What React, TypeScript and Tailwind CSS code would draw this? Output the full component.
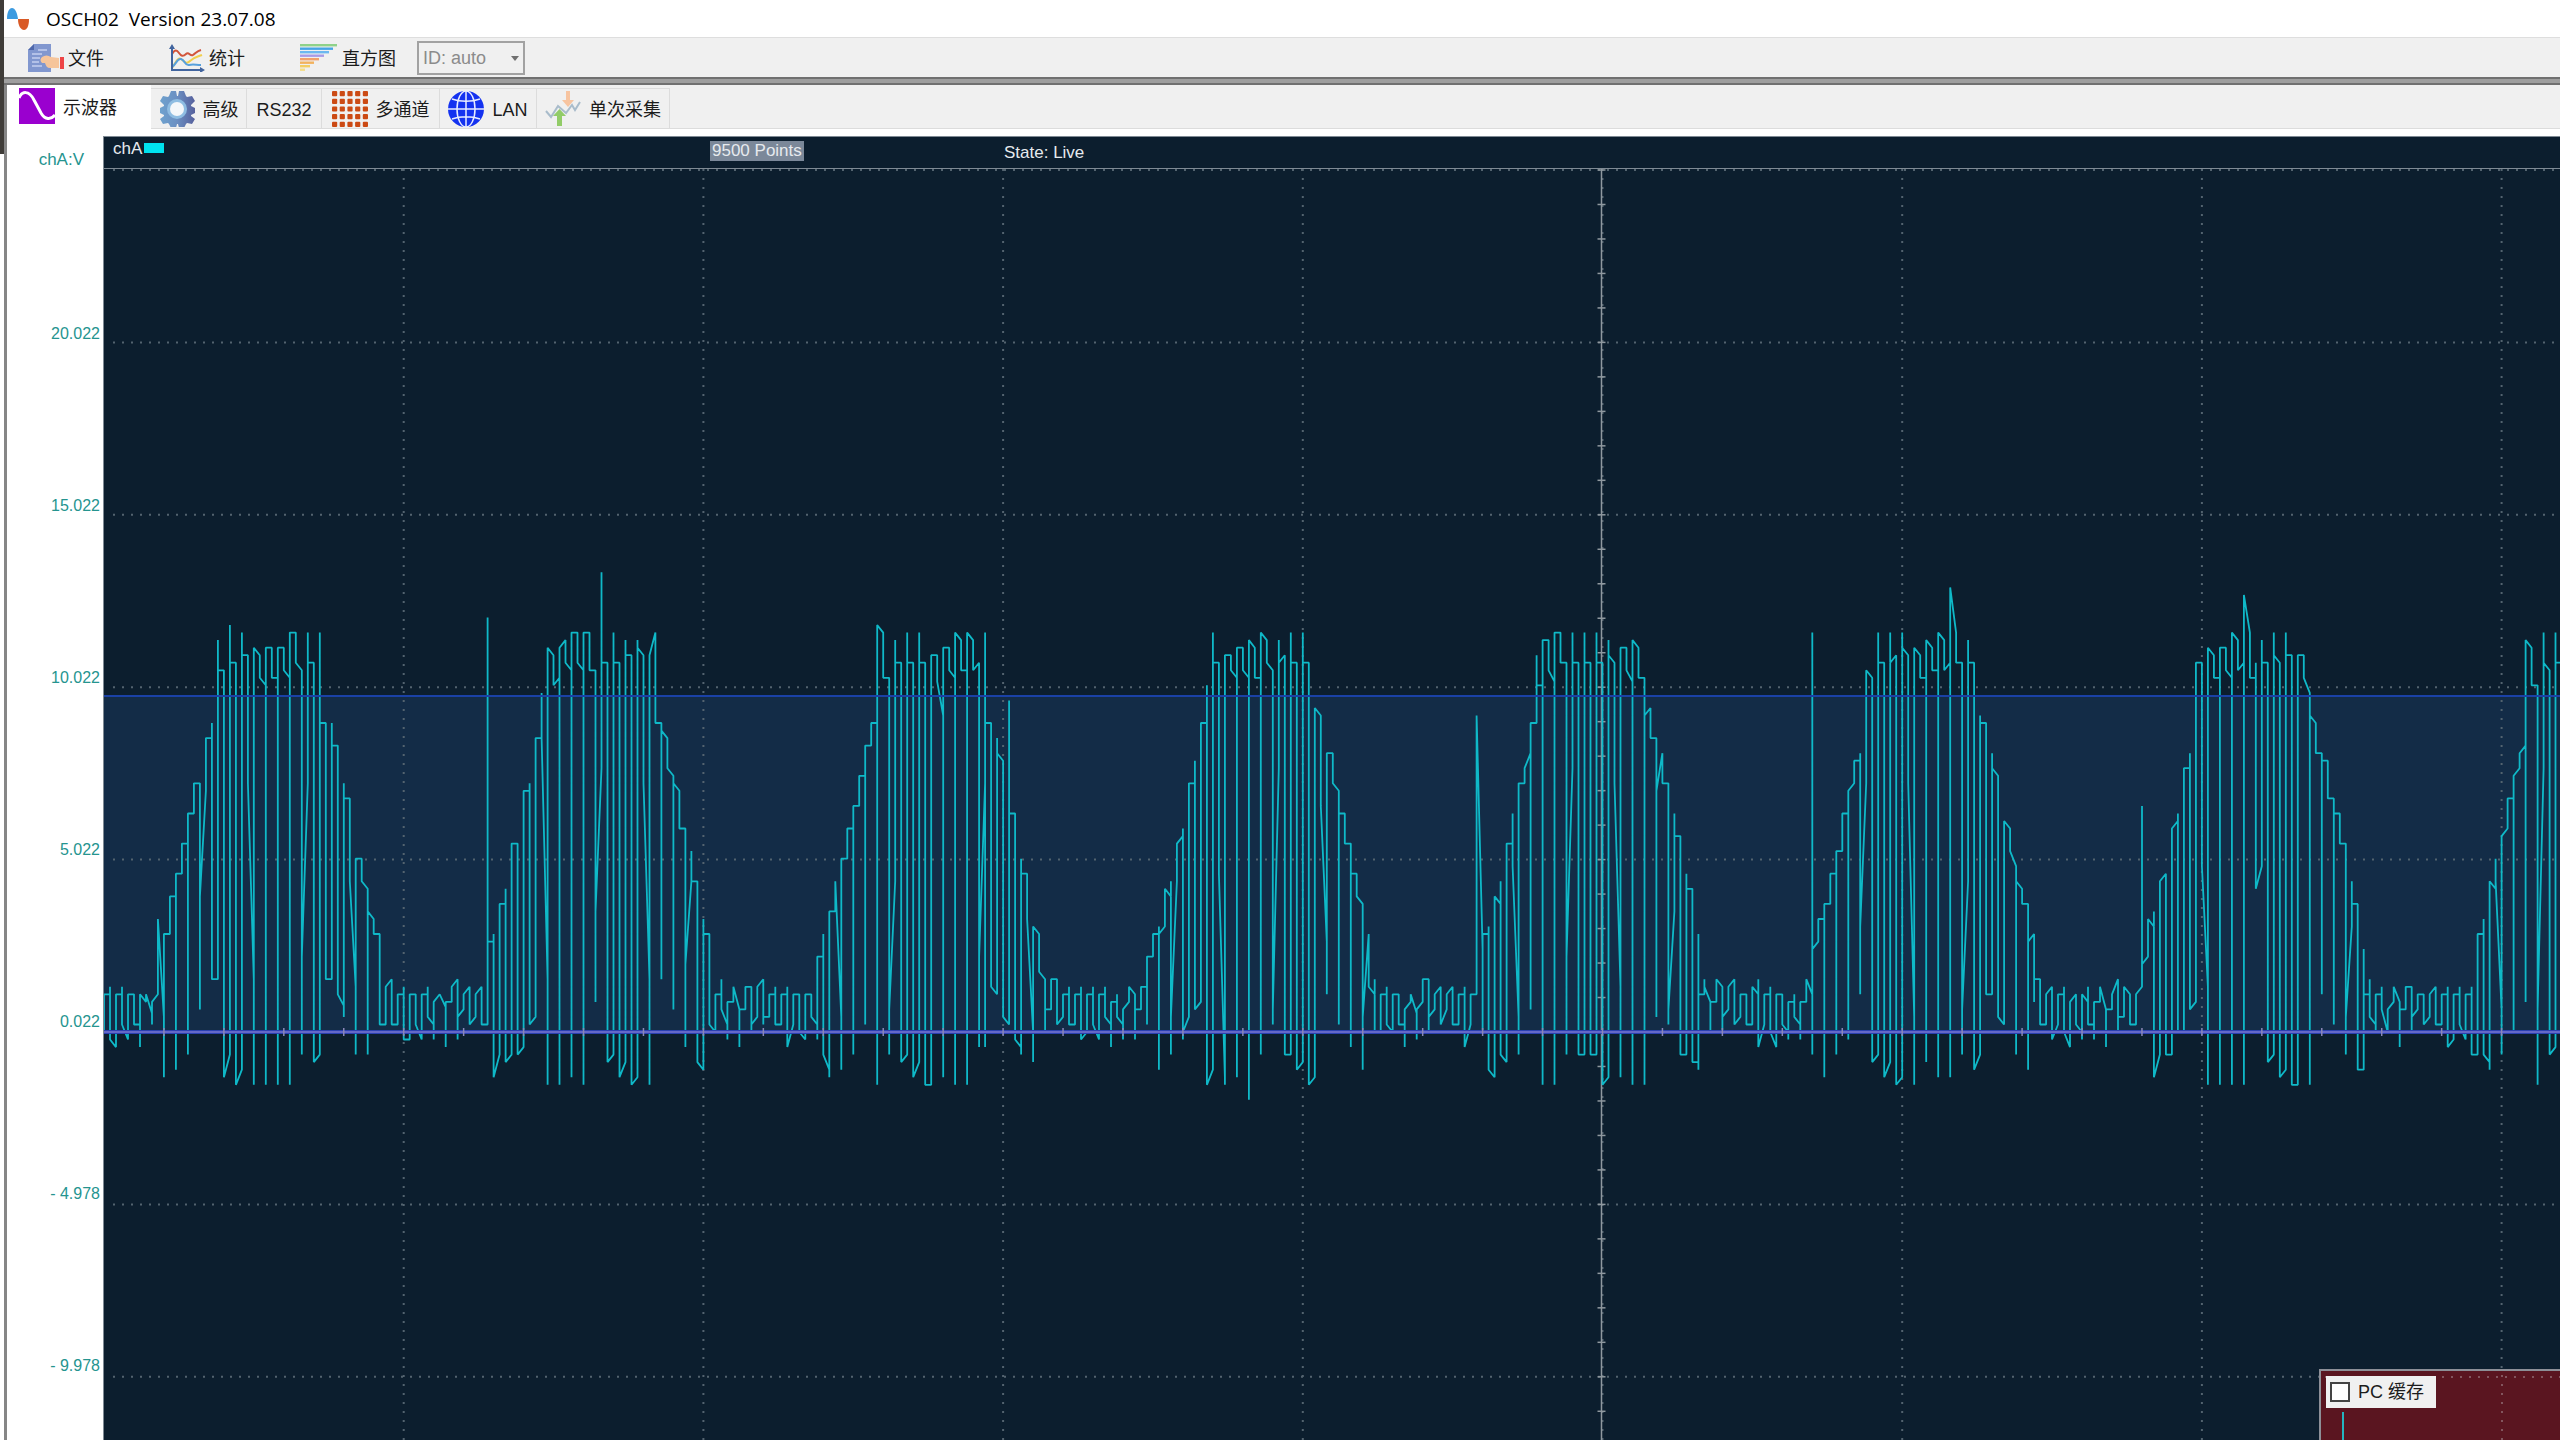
import type { ReactNode } from "react";

// One entry per sample column: the ADC levels the trace visits there, in order.
const TRACE = [
  "0 5|5 6 -1|-2 5|5 6 1|-1 5|5 1|1 -2 5|4 5|2.5 1 4|5 15|2 -6 13|13 18|18 -5 21|21 25|25 -3 29|29 33",
  "33 3 18|32 39|39 41 7|7 52 48|48 -6|-3 54 49|49 -7|-5 53 50|50 33|7 -7 51|50 47|46 -7 51|51 47|47 -7 51",
  "51 48|47 -7 53|53 49|48 -3 10|33 53 49|49 -4|-3 53 41|41 7|7 41 38|38 5|3.5 2 33 31|31 20|6 -3 23|23 20",
  "19 -3 16|15 13|13 1|1 6|7 1|1 5|5 6 -1|-1 5|5 1|-1 5|5 6 2|1 -1 4|5|3.3 -2 4|4 6|7 -1 2|3 5|6 1|2 5|6 1",
  "1 55 11 12|12 13 -6|-3 17|17 19 -4|-3 25|25 -3|-2 32|32 33 1|2 39|39 45 39|7 -7 51|50 46|47 -7 51|52 49",
  "48 -6 53|53 49|48 -7 53|53 48|48 4 16|35 61 49|49 -4|-3 53 49|49 -6|-4 52 50|50 -7|-6 52 51|50 33|7 -7 50",
  "53 41|41 7 40|39 35|34 3 33|32 27|27 -2 9|20 24 20|20 -4|-5 15 13|13 1|0 5|5 7 3|1 -1 4|4 6|3 -2 3|3 6",
  "6 0 1|2 6|7 1 2|2 5|5 6 1|1 5|5 6 -2|1 5|5 0|-1 5|5 2|1 -1 10|10 13 -3|-5 -6 16|16 20|2 -5 23|23 27",
  "27 -3 30|30 34|34 35 1 38|38 41|41 -7 54|53 47|47 -3 3|20 52 49|49 -4|-3 53 49|49 -6|-4 53 49|49 -7|-7 50",
  "50 46.5|42 -6 51|51 48|47 -7 53|52 48|48 -7 53|52 48|49 -2 10|33 53 -2 41|41 6|5 39 37|36 2|1 44 29|29 -1",
  "-2 -3 23 21|21 15|0 -4 14|13 8|7 0 3|3 7|7 1|2 5|5 6 1|1 5|5 6 -1|0 5|5 6 1|-1 5|5 6 2|1 -2 4|4 5 2",
  "1 -1 3|4 6|5 -1 3|3 6|6 1 10|10 13|13 14 -5 13|14 19|18 20 -3 2|20 25|26 27 -1 0|2 33|33 36 3|4 41|41 46 -7",
  "-5 53 49|49 21|-6 -7 50|50 48|47 -6 51|51 48|47 -9 52|51 47|47 -3 53|52 49|48 1 3|35 52 49|50 -3|-3 53 49",
  "49 -5|-4 53 49|49 -7|-6 43|42 30|12 5 37|37 33|32 1 29|29 25|25 -2 21|21 18|17 -5 2|13 6|5 7 0|0 5|5 6 1",
  "0 5|5 1|1 -2 3|4 5|2.5 -1 3|4 7|7 0 2|3 5|6 1|3 5|6 1|1 5|5 6 -2|1 5|5 42|11 0 13|13 14 -5|-6 18|17 20 -3",
  "-4 25|25 29 22|2 -3 33|33 35|37 3 41|41 50 46|46 -7 52|52 48|46.5 -7 53|53 49|49 -3 10|35 53 49|49 -3|-3 53 49",
  "49 -3|-3 53 49|49 -7|-6 52 50|49 33|6 -6 51|51 48|46.5 -7 52|51 47|47 -7 42|43 39|39 2 32|37 33|33 1 3",
  "16 29 26|26 -3|-3 21 19|19 -4|-4 -5 13 5|5 7 6|4 0 4|4 7|6 0 2|3 6|7 1|2 5|5 1|1 6|5 7 -2|1 5|5 6 0|-2 5",
  "5 1|0 -1 4|4 5 2|1 -1 4|4 7|5 -3 53 11|12 15|15 -6 17|17 21|21 -3 24|24 29|29 -1 32|33 36|36 37 5 14|33 48",
  "47 -4|-3 53 49|49 -6|-4 53 49|50 -7|-6 53 51|50 33|2 -7 51|50 47|47 -4 52|51 48|48 -6 53|52 48|49 -6 59|53 49",
  "49 -3 3|20 52 49|49 -5|-3 42 41|41 5|5 37 35|34 2|1 28|27 24|22 -3 20|19 17|17 -5 12|13 4 7|7 1|1 5|6 -1",
  "1 5|5 6 0|-2 4|5 1|0 -1 5|4 6 1|1 -1 4|4 6|3 -2 3|3 5|7 0 2|2 6|5 1|1 5|6 30 9|10 15|14 16 -6|-3 20|21 -3",
  "-3 27|28 29 0|0 35|35 37 3|4 49|49 22|6 -7 51|50 47|47 -7 51|51 48|47 -7 53|52 48|49 -7 58|53 47|47 41 49 19",
  "22 52 49|49 -4|-3 53 50|49 -6|-5 53 50|50 -7|-7 50|50 47|45 -7 42|41 37|37 5 36|36 31|31 1 29|29 25|25 -3 2",
  "14 20 17|17 -5|-5 11 4 5|5 7 2|1 0 5|5 6 3|0 3|4 6|4 -2 3|3 6|6 0 2|3 5|5 1|2 5|6 1|1 5|5 6 -2|-1 5|5 6 1",
  "-1 5|5 6 -3|-3 13|13 15 -3|-4 -5 20|19 23 20|3 -3 26|27 31|31 0 34|35 37|38 4 52|51 46|46 -7 3|35 53 49",
  "48 -3|-2 53 49|49 -3",
].join("|");

// plot geometry, in pixels from the plot's own top left corner
const DIV_X = 299.7;
const DIV_Y = 172.4;
const ZERO_Y = 863;
const COL = DIV_X / 50;
const LEVEL = 7.536;
const CURSOR_Y = 527;
const CENTER_X = DIV_X * 5;

const tracePoints = TRACE.split("|")
  .flatMap((col, i) =>
    col.split(" ").map((v) => `${(i * COL).toFixed(1)},${(ZERO_Y - Number(v) * LEVEL).toFixed(1)}`)
  )
  .join(" ");

const scale = ["20.022", "15.022", "10.022", "5.022", "0.022", "- 4.978", "- 9.978"];

function range(n: number) {
  return Array.from({ length: n }, (_, i) => i);
}

function LogoIcon() {
  return (
    <svg viewBox="0 0 24 24" className="size-6">
      <path d="M1 12C1 5 3 1 6 1s5 4 6 11z" fill="#3d9be0" />
      <path d="M12 12h11c0 7-2 11-5 11s-6-4-6-11z" fill="#d95a26" />
    </svg>
  );
}

function FileIcon() {
  return (
    <svg viewBox="0 0 36 28" className="h-7 w-9">
      <path d="M6 0h17v28H0V6z" fill="#8197cf" />
      <path d="M6 0v6H0z" fill="#4f68ab" />
      <path d="M4 10h10M4 14h8M4 18h7M4 22h10M10 6h9" stroke="#c3cff0" strokeWidth="1.500" />
      <path d="M14 13c3-2 6-2 9 0l8 1v10h-9c-3 0-4-2-5-5l-3 0c-2-2-2-4 0-6z" fill="#f6c59b" />
      <path d="M32 13h4v12h-4z" fill="#ee4546" />
    </svg>
  );
}

function StatsIcon() {
  return (
    <svg viewBox="0 0 36 28" className="h-7 w-9" fill="none">
      <path d="M3 10c3-5 5-4 7-1s4 4 7 1 4 3 7 1 4-4 8-5" stroke="#d2553a" strokeWidth="2" />
      <path d="M3 24c4-6 6-11 9-9s5 6 9 2 7-4 12-6" stroke="#f1cf4d" strokeWidth="2" />
      <path d="M3 23c4-2 5-9 9-8s4 7 8 6 7 0 12 0" stroke="#57a0dc" strokeWidth="2" />
      <path d="M3 2v24h31" stroke="#41649e" strokeWidth="2" />
      <path d="M0 5l3-5 3 5zM31 23l5 3-5 3z" fill="#41649e" />
    </svg>
  );
}

function HistogramIcon() {
  const bars = [
    ["#8fd28a", 37],
    ["#45a5e6", 33],
    ["#6cb8f0", 29],
    ["#a79be6", 24],
    ["#f0a16c", 19],
    ["#f2b25e", 14],
    ["#f3cd62", 10],
    ["#f5dd86", 5],
  ] as const;
  return (
    <svg viewBox="0 0 38 28" className="h-7 w-[38px]">
      {bars.map(([fill, w], i) => (
        <rect key={fill} y={i * 3.5} width={w} height={2.4} fill={fill} />
      ))}
    </svg>
  );
}

function SineIcon() {
  return (
    <svg viewBox="0 0 36 36" className="size-9">
      <rect width="36" height="36" fill="#9a00cf" />
      <path d="M0 10C3 3 10 2 15 12l7 13c4 7 10 7 14 2" fill="none" stroke="#fff" strokeWidth="3" />
    </svg>
  );
}

function GearIcon() {
  return (
    <svg viewBox="0 0 36 36" className="size-9">
      <defs>
        <linearGradient id="gear" x1="0" y1="0" x2="36" y2="0" gradientUnits="userSpaceOnUse">
          <stop offset="0%" stopColor="#6fa3cf" />
          <stop offset="50%" stopColor="#6b8fc2" />
          <stop offset="100%" stopColor="#56609c" />
        </linearGradient>
      </defs>
      <g fill="url(#gear)">
        <path d="M10 5l2-5h5l1 5h1l1-5h5l2 5 1 1 5-1 3 5-4 4v1l4 2v5l-4 2v1l4 3-3 5-5-1-1 1-2 4h-5l-1-4h-1l-1 4h-5l-2-4-1-1-5 1-3-5 4-3v-1l-4-2v-5l4-2v-1L1 10l3-5 5 1z" />
      </g>
      <circle cx="18" cy="18" r="10" fill="#8fbde2" />
      <circle cx="18" cy="18" r="7" fill="#f4f7fa" />
    </svg>
  );
}

function ChannelsIcon() {
  return (
    <svg viewBox="0 0 36 36" className="size-9" fill="#cc4a14">
      {range(25).map((i) => (
        <rect key={i} x={(i % 5) * 7.7} y={Math.floor(i / 5) * 7.7} width="5.200" height="5.200" rx="1" />
      ))}
    </svg>
  );
}

function GlobeIcon() {
  return (
    <svg viewBox="0 0 36 36" className="size-9" fill="none" stroke="#e8ecff" strokeWidth="1.500">
      <circle cx="18" cy="18" r="18" fill="#1432f0" stroke="none" />
      <ellipse cx="18" cy="18" rx="9" ry="18" />
      <path d="M18 0v36M0 18h36M4 8c8 3 20 3 28 0M4 28c8-3 20-3 28 0" />
    </svg>
  );
}

function CaptureIcon() {
  return (
    <svg viewBox="0 0 36 36" className="size-9" fill="none">
      <path d="M1 20l5 6 7-11 8 7 6-8 3 5 5-8" stroke="#a9bccb" strokeWidth="2" />
      <path d="M21 0h4v9h4l-6 7-6-7h4z" fill="#f7c4a0" />
      <path d="M12 35h5V25h4l-6.500-7L8 25h4z" fill="#92cc68" />
    </svg>
  );
}

function ToolButton({ icon, children }: { icon: ReactNode; children: ReactNode }) {
  return (
    <button type="button" className="flex items-center gap-1">
      {icon}
      <span className="pt-0.5">{children}</span>
    </button>
  );
}

function Tab({ icon, width, children }: { icon?: ReactNode; width: string; children: ReactNode }) {
  return (
    <button
      type="button"
      role="tab"
      aria-selected={false}
      className={`flex items-center justify-center gap-2 border-t border-r border-[#dcdcdc] ${width}`}
    >
      {icon}
      <span className="pt-0.5">{children}</span>
    </button>
  );
}

function Plot() {
  return (
    <svg className="absolute inset-0 size-full">
      <rect y={CURSOR_Y} width="100%" height={ZERO_Y - CURSOR_Y} fill="#132c47" />
      <g stroke="#53636f" strokeWidth="2" strokeDasharray="2 7">
        {range(8).map((i) => (
          <line key={i} x1="9" x2="100%" y1={ZERO_Y + (i - 5) * DIV_Y} y2={ZERO_Y + (i - 5) * DIV_Y} />
        ))}
        {range(8).map((i) => (
          <line key={i} x1={(i + 1) * DIV_X} x2={(i + 1) * DIV_X} y1="0" y2="100%" />
        ))}
      </g>
      <g stroke="#8f989f" strokeWidth="1.500">
        <line x1={CENTER_X - 1} x2={CENTER_X - 1} y1="0" y2="100%" />
        {range(37).map((i) => {
          const y = ZERO_Y + (i - 25) * (DIV_Y / 5);
          return <line key={i} x1={CENTER_X - 5} x2={CENTER_X + 3} y1={y} y2={y} />;
        })}
      </g>
      <polyline points={tracePoints} fill="none" stroke="#0fb9c8" strokeWidth="1.800" strokeLinejoin="bevel" />
      <line x1="0" x2="100%" y1={CURSOR_Y} y2={CURSOR_Y} stroke="#1a41a6" strokeWidth="2" />
      <line x1="0" x2="100%" y1={ZERO_Y} y2={ZERO_Y} stroke="#2b40b0" strokeWidth="4" />
      <line x1="0" x2="100%" y1={ZERO_Y} y2={ZERO_Y} stroke="#6468c8" strokeWidth="2" />
      {range(41).map((i) => (
        <line
          key={i}
          x1={(i + 1) * 59.94}
          x2={(i + 1) * 59.94}
          y1={ZERO_Y - 4}
          y2={ZERO_Y + 4}
          stroke="#8a87b8"
          strokeWidth="1.500"
        />
      ))}
    </svg>
  );
}

function BufferPanel() {
  return (
    <div className="absolute right-0 bottom-0 h-[71px] w-[241px] border-t-2 border-l-2 border-[#8d8f97] bg-[#5a1520] pt-[5px] pl-[5px]">
      <svg className="absolute inset-0 size-full">
        <path d="M4 6h236M181 4v68" stroke="#83555e" strokeWidth="2" strokeDasharray="2 7" />
        <path d="M22 41v32" stroke="#25b4c0" strokeWidth="2" />
      </svg>
      <label className="relative flex h-8 w-[110px] items-center gap-2 bg-[#f0f0f0] pl-1">
        <input
          type="checkbox"
          className="size-5 appearance-none border-2 border-[#444] bg-white checked:bg-[#444]"
        />
        <span>PC 缓存</span>
      </label>
    </div>
  );
}

export default function App() {
  return (
    <div className="flex h-screen overflow-hidden bg-white font-['Liberation_Sans','Noto_Sans_CJK_SC',sans-serif] text-[18px] leading-6 text-[#1c1c1c]">
      <div className="w-1 shrink-0">
        <div className="h-[154px] bg-[#3f3c38]" />
      </div>
      <div className="flex min-w-0 flex-1 flex-col">
        <header className="flex h-[38px] items-center gap-4 border-b border-[#dedede] pl-0.5">
          <LogoIcon />
          <h1 className="font-['Open_Sans',sans-serif] text-[19px] whitespace-pre text-black">
            OSCH02  Version 23.07.08
          </h1>
        </header>

        <div className="flex h-[39px] items-center bg-[#f0f0f0] pl-6">
          <div className="w-[141px]">
            <ToolButton icon={<FileIcon />}>文件</ToolButton>
          </div>
          <div className="w-[131px]">
            <ToolButton icon={<StatsIcon />}>统计</ToolButton>
          </div>
          <div className="w-[117px]">
            <ToolButton icon={<HistogramIcon />}>直方图</ToolButton>
          </div>
          <div className="relative">
            <select
              aria-label="ID"
              className="block h-[34px] w-[108px] appearance-none border-2 border-[#a2a2a2] bg-[#f0f0f0] pl-1 text-[#8b8b8b]"
            >
              <option>ID: auto</option>
            </select>
            <svg viewBox="0 0 8 5" className="pointer-events-none absolute top-[15px] right-[6px] h-[5px] w-2">
              <path d="M0 0h8L4 5z" fill="#707070" />
            </svg>
          </div>
        </div>

        <div className="h-2 shrink-0 border-y-2 border-[#707070] bg-[#9e9e9e]" />

        <div className="flex min-h-0 flex-1 flex-col border-l-[3px] border-[#868686]">
          <div role="tablist" className="flex h-11 shrink-0 border-b border-[#dcdcdc] bg-[#f0f0f0]">
            <button
              type="button"
              role="tab"
              aria-selected
              className="-mb-px flex w-36 items-start gap-2 bg-white pt-[3px] pl-3"
            >
              <SineIcon />
              <span className="pt-2">示波器</span>
            </button>
            <div className="flex pt-[3px]">
              <Tab icon={<GearIcon />} width="w-24">高级</Tab>
              <Tab width="w-[75px]">RS232</Tab>
              <Tab icon={<ChannelsIcon />} width="w-[118px]">多通道</Tab>
              <Tab icon={<GlobeIcon />} width="w-[97px]">LAN</Tab>
              <Tab icon={<CaptureIcon />} width="w-[133px]">单次采集</Tab>
            </div>
          </div>

          <div className="flex min-h-0 flex-1 pt-[7px]">
            <aside className="w-24 shrink-0 pr-[3px] text-right text-[16px] text-[#25948f]">
              <div className="h-28 pt-3 pr-4 text-[17px]">chA:V</div>
              {scale.map((v) => (
                <div key={v} className="flex h-[172px] items-center justify-end whitespace-pre">
                  {v}
                </div>
              ))}
            </aside>

            <main className="flex min-w-0 flex-1 flex-col border-t border-l border-[#7f8a94] bg-[#0c1e2e]">
              <div className="grid h-8 shrink-0 grid-cols-[597px_294px_1fr] items-center border-b border-[#7f8a94] pl-[9px] text-[17px] leading-5 text-[#e6eaee]">
                <div className="flex items-center pb-2">
                  chA
                  <span className="mb-0.5 ml-0.5 h-2.5 w-5 bg-[#00e3f0]" />
                </div>
                <div className="pb-1">
                  <span className="inline-block h-5 bg-[#7b8899] px-0.5">9500 Points</span>
                </div>
                <div>State: Live</div>
              </div>
              <div className="relative min-h-0 flex-1">
                <Plot />
                <BufferPanel />
              </div>
            </main>
          </div>
        </div>
      </div>
    </div>
  );
}
